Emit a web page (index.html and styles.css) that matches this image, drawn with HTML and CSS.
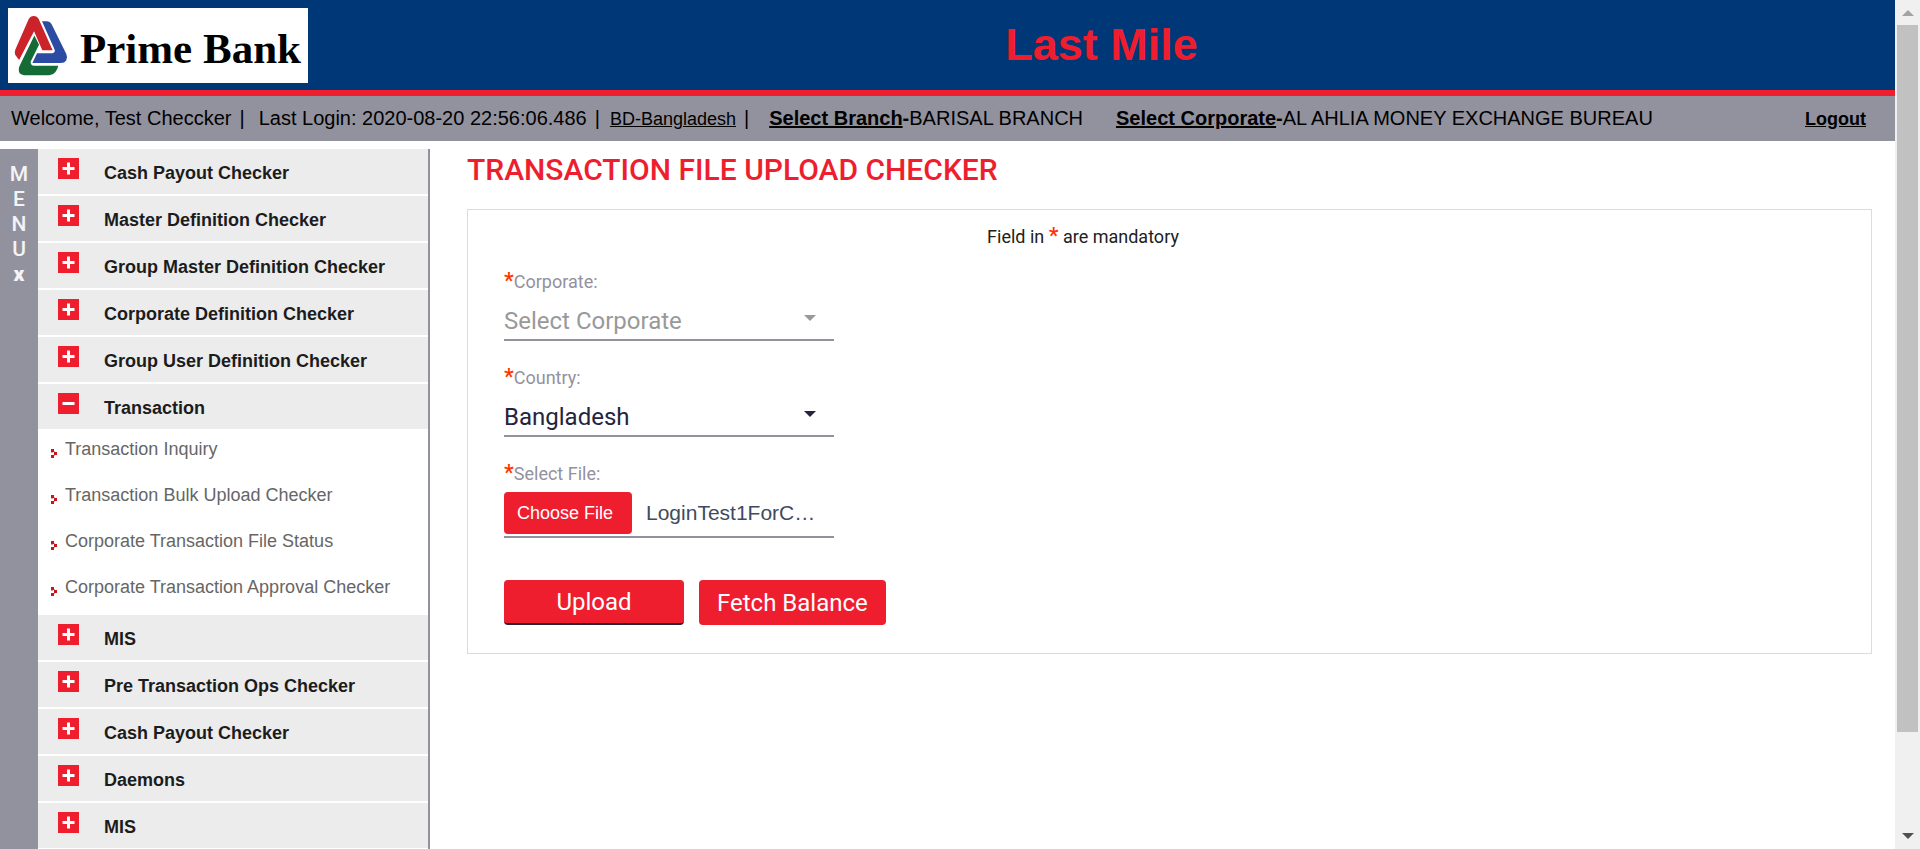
FILE: index.html
```html
<!DOCTYPE html>
<html lang="en">
<head>
<meta charset="utf-8">
<title>Last Mile - Transaction File Upload Checker</title>
<link rel="stylesheet" href="styles.css">
</head>
<body>
<svg class="defs" aria-hidden="true">
  <symbol id="plus" viewBox="0 0 21 21"><rect width="21" height="21" fill="#ee1e2f"/><path d="M10.5 4.5v12M4.5 10.5h12" stroke="#fff" stroke-width="3"/></symbol>
  <symbol id="minus" viewBox="0 0 21 21"><rect width="21" height="21" fill="#ee1e2f"/><path d="M4.5 10.5h12" stroke="#fff" stroke-width="3"/></symbol>
  <symbol id="bullet" viewBox="0 0 7 9"><path d="M0 0h3v3H0zM0 6h3v3H0zM3 3h3v3H3z" fill="#c4161c"/><path d="M3 2h1v1H3zM3 6h1v1H3zM0 3h2v1H0z" fill="#e59a9c"/></symbol>
</svg>
<div class="page">
  <header class="banner">
    <div class="logo">
      <svg class="logo-mark" viewBox="40 40 168 190" aria-hidden="true">
        <path fill="#cb2329" d="M58 179 46 163Q43 156 47 146L87 55Q92 46 102 46 112 46 117 55L159 149H128L103 92Z"/>
        <path fill="#2c4ca3" d="M127 62H141Q151 62 156 71L200 160Q205 170 200 180 195 188 184 188H98L112 158H158Q168 157 165 147Z"/>
        <path fill="#146b36" d="M104 105 118 133 93 183Q91 195 104 196H176Q174 207 167 216 160 225 149 225H73Q56 223 57 207 57 201 60 195Z"/>
      </svg>
      <span class="logo-name">Prime Bank</span>
    </div>
    <h1 class="app-name">Last Mile</h1>
  </header>
  <div class="userbar">
    <span>Welcome, Test Checcker</span><span class="bar">|</span>
    <span class="login">Last Login: 2020-08-20 22:56:06.486</span><span class="bar">|</span>
    <a class="country" href="#">BD-Bangladesh</a><span class="bar">|</span>
    <span class="branch"><b><a href="#">Select Branch</a>-</b>BARISAL BRANCH</span>
    <span class="corp"><b><a href="#">Select Corporate</a>-</b>AL AHLIA MONEY EXCHANGE BUREAU</span>
    <a class="logout" href="#">Logout</a>
  </div>
  <div class="body">
    <button class="strip" type="button" aria-label="Close menu"><span>M</span><span>E</span><span>N</span><span>U</span><b>x</b></button>
    <nav class="menu">
      <button class="group" type="button"><svg class="box"><use href="#plus"/></svg>Cash Payout Checker</button>
      <button class="group" type="button"><svg class="box"><use href="#plus"/></svg>Master Definition Checker</button>
      <button class="group" type="button"><svg class="box"><use href="#plus"/></svg>Group Master Definition Checker</button>
      <button class="group" type="button"><svg class="box"><use href="#plus"/></svg>Corporate Definition Checker</button>
      <button class="group" type="button"><svg class="box"><use href="#plus"/></svg>Group User Definition Checker</button>
      <button class="group" type="button" aria-expanded="true"><svg class="box"><use href="#minus"/></svg>Transaction</button>
      <ul class="sub">
        <li><svg class="bullet"><use href="#bullet"/></svg><a href="#">Transaction Inquiry</a></li>
        <li><svg class="bullet"><use href="#bullet"/></svg><a href="#">Transaction Bulk Upload Checker</a></li>
        <li><svg class="bullet"><use href="#bullet"/></svg><a href="#">Corporate Transaction File Status</a></li>
        <li><svg class="bullet"><use href="#bullet"/></svg><a href="#">Corporate Transaction Approval Checker</a></li>
      </ul>
      <button class="group" type="button"><svg class="box"><use href="#plus"/></svg>MIS</button>
      <button class="group" type="button"><svg class="box"><use href="#plus"/></svg>Pre Transaction Ops Checker</button>
      <button class="group" type="button"><svg class="box"><use href="#plus"/></svg>Cash Payout Checker</button>
      <button class="group" type="button"><svg class="box"><use href="#plus"/></svg>Daemons</button>
      <button class="group" type="button"><svg class="box"><use href="#plus"/></svg>MIS</button>
    </nav>
    <main class="content">
      <h2 class="title">TRANSACTION FILE UPLOAD CHECKER</h2>
      <form class="panel">
        <p class="note">Field in <span class="req">*</span> are mandatory</p>
        <div class="field">
          <label for="corporate"><span class="req">*</span>Corporate:</label>
          <div class="pick muted"><select id="corporate"><option>Select Corporate</option></select></div>
        </div>
        <div class="field">
          <label for="country"><span class="req">*</span>Country:</label>
          <div class="pick"><select id="country"><option>Bangladesh</option></select></div>
        </div>
        <div class="field">
          <label for="file"><span class="req">*</span>Select File:</label>
          <label class="file"><input id="file" type="file"><span class="choose">Choose File</span><span class="filename">LoginTest1ForC…</span></label>
        </div>
        <div class="actions">
          <button class="btn upload" type="button">Upload</button>
          <button class="btn" type="button">Fetch Balance</button>
        </div>
      </form>
    </main>
  </div>
</div>
<div class="scroll" aria-hidden="true">
  <svg class="arrow" viewBox="0 0 25 25"><path d="M7 16h12l-6-6z" fill="#a3a3a3"/></svg>
  <div class="track"><div class="thumb"></div></div>
  <svg class="arrow" viewBox="0 0 25 25"><path d="M7 9h12l-6 6z" fill="#505050"/></svg>
</div>
</body>
</html>
```
FILE: styles.css
```css
* { box-sizing: border-box; }
body {
  margin: 0;
  height: 100vh;
  display: flex;
  overflow: hidden;
  background: #fff;
  color: #000;
  font-family: "Liberation Sans", Arial, sans-serif;
}
button, select { font-family: inherit; margin: 0; border: 0; }
.defs { position: absolute; width: 0; height: 0; }
.page { flex: 1; min-width: 0; display: flex; flex-direction: column; }

.banner {
  display: flex;
  align-items: flex-start;
  padding: 8px 0 7px 8px;
  background: #003777;
  border-bottom: 6px solid #ee1e2f;
}
.logo {
  display: flex;
  align-items: flex-start;
  width: 300px;
  height: 75px;
  padding: 6px 0 0 5px;
  background: #fff;
}
.logo-mark { width: 56px; height: 63px; flex: none; }
.logo-name {
  margin-left: 11px;
  padding-top: 10px;
  font: bold 43px/50px "Liberation Serif", "Times New Roman", serif;
  white-space: nowrap;
}
.app-name {
  flex: 1;
  margin: 0;
  padding-top: 12px;
  text-align: center;
  font-size: 45px;
  line-height: 50px;
  color: #ee1e2f;
}

.userbar {
  display: flex;
  align-items: baseline;
  height: 45px;
  padding: 10px 29px 0 11px;
  background: #92929e;
  font-size: 20px;
  line-height: 24px;
  white-space: nowrap;
}
.userbar a { color: inherit; }
.bar { margin-left: 8px; }
.login { margin-left: 14px; }
.country, .logout { font-size: 18px; }
.country { margin-left: 10px; }
.branch { margin-left: 20px; }
.corp { margin-left: 33px; }
.logout { margin-left: auto; font-weight: bold; }

.body { flex: 1; display: flex; margin-top: 8px; min-height: 0; }
.strip {
  width: 38px;
  padding: 13px 0 0;
  display: flex;
  flex-direction: column;
  justify-content: flex-start;
  align-items: center;
  background: #92929e;
  color: #f4f4f6;
  font: 500 21px/25px Roboto, sans-serif;
}
.strip b { font-weight: 900; }
.menu {
  width: 392px;
  flex: none;
  overflow: hidden;
  border-right: 2px solid #92929e;
}
.group {
  display: flex;
  align-items: flex-start;
  width: 100%;
  height: 45px;
  margin-bottom: 2px;
  padding: 9px 0 0 20px;
  background: #ececec;
  color: #1c1c1c;
  font-size: 18px;
  font-weight: bold;
  line-height: 30px;
  text-align: left;
}
.box { width: 21px; height: 21px; margin-right: 25px; flex: none; }
.sub { list-style: none; margin: -2px 0 0; padding: 0 0 2px 13px; }
.sub li { display: flex; height: 46px; padding-top: 5px; line-height: 30px; font-size: 18px; }
.sub a { color: #666; text-decoration: none; }
.bullet { width: 7px; height: 9px; margin: 15px 7px 0 0; }

.content {
  flex: 1;
  padding: 0 23px 0 37px;
  font-family: Roboto, sans-serif;
}
.title {
  margin: 0 0 18px;
  font-size: 30px;
  font-weight: 500;
  line-height: 42px;
  color: #ee1e2f;
}
.panel { border: 1px solid #dcdcde; padding: 14px 36px 28px; }
.note {
  margin: 0 173px 22px 0;
  text-align: center;
  font-size: 18px;
  line-height: 25px;
  color: #212121;
}
.req { font-size: 22px; font-weight: 500; line-height: 20px; color: #ff3300; }
.field { width: 330px; height: 96px; }
.field > label:first-child { display: block; font-size: 18px; line-height: 20px; color: #92929e; }
.pick { display: flex; align-items: center; margin-top: 11px; border-bottom: 2px solid #92929e; color: #24243c; }
.pick.muted { color: #999; }
.pick::after {
  content: "";
  box-sizing: content-box;
  flex: none;
  width: 0;
  margin: 0 18px 6px -30px;
  border: 6px solid transparent;
  border-top-color: currentColor;
  border-bottom: 0;
  pointer-events: none;
}
select {
  appearance: none;
  width: 100%;
  height: 36px;
  padding: 0;
  background: transparent;
  color: inherit;
  font-size: 24px;
  outline: 0;
}
.file {
  display: flex;
  align-items: center;
  height: 46px;
  margin-top: 8px;
  padding-bottom: 2px;
  border-bottom: 2px solid #92929e;
  font-family: "Liberation Sans", Arial, sans-serif;
}
.file input { position: absolute; opacity: 0; width: 128px; height: 42px; margin: 0; }
.choose {
  width: 128px;
  border-radius: 4px;
  background: #ee1e2f;
  color: #fff;
  font-size: 18px;
  line-height: 42px;
  padding-left: 13px;
}
.filename { margin-left: 14px; font-size: 21px; color: #3e4b5f; }
.actions { display: flex; gap: 15px; margin-top: 21px; }
.btn {
  height: 45px;
  padding: 0 18px;
  border-radius: 4px;
  background: #ee1e2f;
  color: #fff;
  font-size: 24px;
}
.upload { width: 180px; border-bottom: 2px solid #24243c; }

.scroll { width: 25px; display: flex; flex-direction: column; background: #f0f0f0; }
.arrow { width: 25px; height: 25px; flex: none; }
.track { flex: 1; padding: 0 2px; }
.thumb { height: 88.5%; background: #c1c1c1; }
```
